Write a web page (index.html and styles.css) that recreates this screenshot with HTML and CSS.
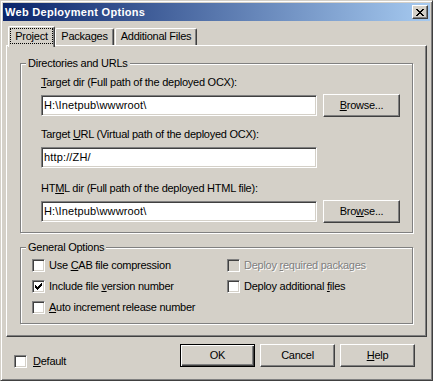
FILE: index.html
```html
<!DOCTYPE html>
<html>
<head>
    <meta charset="UTF-8">
    <title>Web Deployment Options</title>
    <link rel="stylesheet" href="styles.css">
</head>
<body>
    <div class="window">
        <div class="titlebar">
            <span class="title">Web Deployment Options</span>
            <span class="close-btn">
                <svg width="8" height="7" viewBox="0 0 8 7" shape-rendering="crispEdges">
                    <path d="M0 0h2v1h-2zM6 0h2v1h-2zM1 1h2v1h-2zM5 1h2v1h-2zM2 2h4v1h-4zM3 3h2v1h-2zM2 4h4v1h-4zM1 5h2v1h-2zM5 5h2v1h-2zM0 6h2v1h-2zM6 6h2v1h-2z" fill="#000"/>
                </svg>
            </span>
        </div>

        <div class="tabs">
            <div class="tab tab-project active"><span class="focus">Project</span></div>
            <div class="tab tab-packages">Packages</div>
            <div class="tab tab-files">Additional Files</div>
        </div>

        <div class="panel">
            <!-- Katalogi i adresy -->
            <div class="group group-dirs">
                <span class="group-title">Directories and URLs</span>
                <div class="field-label"><u>T</u>arget dir (Full path of the deployed OCX):</div>
                <div class="field-row">
                    <div class="textbox">H:\Inetpub\wwwroot\</div>
                    <button class="btn browse"><u>B</u>rowse...</button>
                </div>
                <div class="field-label second">Target <u>U</u>RL (Virtual path of the deployed OCX):</div>
                <div class="field-row">
                    <div class="textbox">http://ZH/</div>
                </div>
                <div class="field-label third">HT<u>M</u>L dir (Full path of the deployed HTML file):</div>
                <div class="field-row">
                    <div class="textbox">H:\Inetpub\wwwroot\</div>
                    <button class="btn browse">Bro<u>w</u>se...</button>
                </div>
            </div>

            <!-- Opcje ogolne -->
            <div class="group group-opts">
                <span class="group-title">General Options</span>
                <div class="opts-grid">
                    <div class="check">
                        <span class="box"></span>
                        <span>Use <u>C</u>AB file compression</span>
                    </div>
                    <div class="check disabled">
                        <span class="box"></span>
                        <span>Deploy <u>r</u>equired packages</span>
                    </div>
                    <div class="check">
                        <span class="box">
                            <svg class="tick" width="7" height="7" viewBox="0 0 7 7" shape-rendering="crispEdges">
                                <path d="M6 0h1v1h-1zM5 1h2v1h-2zM0 2h1v1h-1zM4 2h3v1h-3zM0 3h2v1h-2zM3 3h3v1h-3zM0 4h5v1h-5zM1 5h3v1h-3zM2 6h1v1h-1z" fill="#000"/>
                            </svg>
                        </span>
                        <span>Include file <u>v</u>ersion number</span>
                    </div>
                    <div class="check">
                        <span class="box"></span>
                        <span>Deploy additional <u>f</u>iles</span>
                    </div>
                    <div class="check">
                        <span class="box"></span>
                        <span><u>A</u>uto increment release number</span>
                    </div>
                </div>
            </div>
        </div>

        <div class="footer">
            <div class="check default-check">
                <span class="box"></span>
                <span><u>D</u>efault</span>
            </div>
            <div class="buttons">
                <button class="btn btn-default">OK</button>
                <button class="btn">Cancel</button>
                <button class="btn"><u>H</u>elp</button>
            </div>
        </div>
    </div>
</body>
</html>
```

FILE: styles.css
```css
* {
    box-sizing: border-box;
}

html, body {
    margin: 0;
    padding: 0;
}

body {
    width: 433px;
    height: 381px;
    overflow: hidden;
    background-color: #d4d0c8;
    font-family: "Liberation Sans", Arial, sans-serif;
    font-size: 11px;
    line-height: 13px;
    letter-spacing: -0.25px;
    color: #000;
}

u {
    text-decoration: underline;
    text-underline-offset: 1px;
}

/* Okno */
.window {
    width: 433px;
    height: 381px;
    padding: 2px;
    background-color: #d4d0c8;
    border: 1px solid;
    border-color: #d4d0c8 #404040 #404040 #d4d0c8;
    box-shadow: inset 1px 1px 0 #fff, inset -1px -1px 0 #808080;
}

.titlebar {
    height: 18px;
    display: flex;
    align-items: center;
    justify-content: space-between;
    padding: 0 2px;
    background: linear-gradient(to right, #0a246a, #a6caf0);
}

.title {
    color: #fff;
    font-weight: bold;
    letter-spacing: 0.3px;
}

.close-btn {
    width: 16px;
    height: 14px;
    display: flex;
    align-items: center;
    justify-content: center;
    background-color: #d4d0c8;
    border: 1px solid;
    border-color: #fff #404040 #404040 #fff;
    box-shadow: inset -1px -1px 0 #808080;
}

/* Zakladki */
.tabs {
    height: 19px;
    margin-top: 5px;
    margin-left: 5px;
    display: flex;
    align-items: flex-end;
}

.tab {
    height: 17px;
    display: flex;
    align-items: center;
    justify-content: center;
    padding-bottom: 1px;
    background-color: #d4d0c8;
    border-left: 1px solid #fff;
    border-top: 1px solid #fff;
    border-right: 1px solid #404040;
    border-radius: 2px 2px 0 0;
    box-shadow: inset -1px 0 0 #808080;
}

.tab-project {
    width: 47px;
}

.tab-packages {
    width: 59px;
}

.tab-files {
    width: 82px;
    margin-left: 1px;
}

.tab.active {
    height: 21px;
    margin-bottom: -2px;
    padding-bottom: 2px;
    position: relative;
    z-index: 1;
}

.focus {
    width: 43px;
    height: 16px;
    display: flex;
    align-items: center;
    justify-content: center;
    border: 1px dotted #000;
}

/* Panel zakladki */
.panel {
    height: 292px;
    margin: 0 3px;
    padding: 17px 13px 0;
    border: 1px solid;
    border-color: #fff #404040 #404040 #fff;
    box-shadow: inset -1px -1px 0 #808080;
}

.group {
    position: relative;
    border: 1px solid #808080;
    box-shadow: 1px 1px 0 #fff, inset 1px 1px 0 #fff;
}

.group-title {
    position: absolute;
    top: -7px;
    left: 5px;
    padding: 0 2px;
    background-color: #d4d0c8;
}

.group-dirs {
    height: 170px;
    padding: 12px 0 0 20px;
}

.field-label.second {
    margin-top: 11px;
}

.field-label.third {
    margin-top: 13px;
}

.field-row {
    height: 23px;
    margin-top: 5px;
    display: flex;
    align-items: center;
    gap: 6px;
}

.textbox {
    width: 276px;
    height: 21px;
    padding: 0 2px;
    line-height: 19px;
    letter-spacing: 0.15px;
    background-color: #fff;
    border: 1px solid;
    border-color: #808080 #fff #fff #808080;
    box-shadow: inset 1px 1px 0 #404040, inset -1px -1px 0 #d4d0c8;
}

.btn {
    width: 75px;
    height: 23px;
    padding: 0;
    font: inherit;
    letter-spacing: inherit;
    color: #000;
    background-color: #d4d0c8;
    border: 1px solid;
    border-color: #fff #404040 #404040 #fff;
    box-shadow: inset -1px -1px 0 #808080;
}

.btn.browse {
    width: 77px;
}

.btn-default {
    border-color: #000;
    box-shadow: inset 1px 1px 0 #fff, inset -1px -1px 0 #404040, inset -2px -2px 0 #808080;
}

.group-opts {
    height: 77px;
    margin-top: 14px;
    padding: 7px 0 0 11px;
}

.opts-grid {
    display: grid;
    grid-template-columns: 195px auto;
    grid-auto-rows: 21px;
}

/* Pola wyboru */
.check {
    display: flex;
    align-items: center;
    gap: 4px;
}

.box {
    width: 13px;
    height: 13px;
    flex-shrink: 0;
    padding: 2px;
    background-color: #fff;
    border: 1px solid;
    border-color: #808080 #fff #fff #808080;
    box-shadow: inset 1px 1px 0 #404040, inset -1px -1px 0 #d4d0c8;
}

.tick {
    display: block;
}

.check.disabled {
    color: #808080;
    text-shadow: 1px 1px 0 #fff;
}

.check.disabled .box {
    background-color: #d4d0c8;
}

/* Dol okna */
.footer {
    display: flex;
    align-items: flex-start;
    padding: 7px 15px 0 11px;
}

.default-check {
    margin-top: 11px;
    gap: 6px;
}

.buttons {
    margin-left: auto;
    display: flex;
    gap: 5px;
}
```
